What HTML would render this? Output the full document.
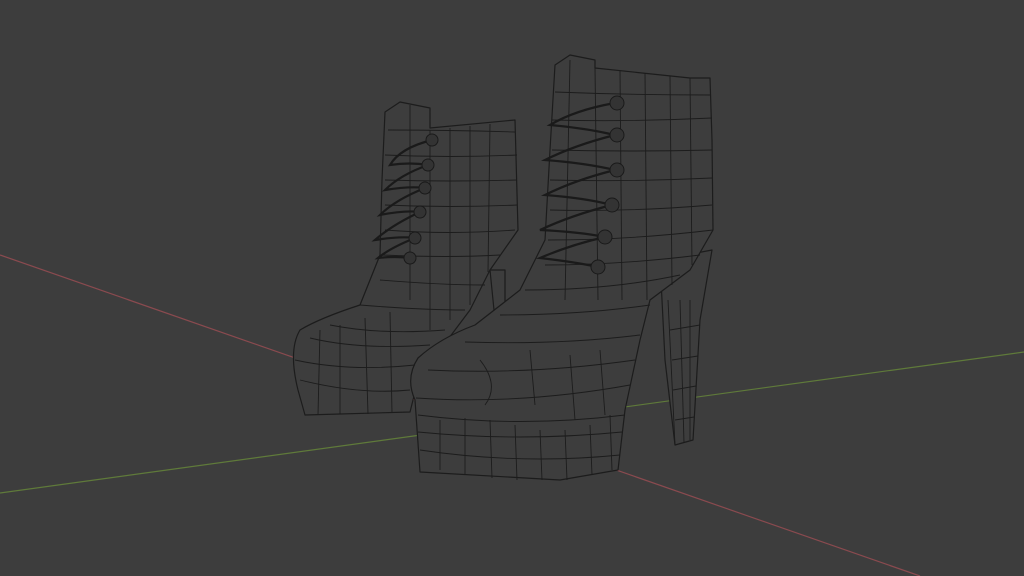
<!DOCTYPE html>
<html><head><style>html,body{margin:0;padding:0;background:#3d3d3d;overflow:hidden}svg{display:block}</style></head>
<body>
<svg width="1024" height="576" viewBox="0 0 1024 576" xmlns="http://www.w3.org/2000/svg">
<rect width="1024" height="576" fill="#3d3d3d"/>
<line x1="0" y1="255" x2="920" y2="576" stroke="#8a4a4f" stroke-width="1.2"/>
<line x1="0" y1="493" x2="1024" y2="352" stroke="#5f7a3a" stroke-width="1.2"/>
<g fill="#3d3d3d" stroke="#1c1c1c" stroke-width="1.2" stroke-linejoin="round">
<path d="M385 112 L400 102 L430 108 L430 128 L515 120 L518 230 L490 270 L470 310 L440 350 L415 392 L410 412 L305 415 L298 390 Q288 350 300 330 Q320 318 360 305 L380 255 L382 180 Z"/>
<path d="M490 270 L505 270 L505 330 L495 320 Z"/>
<path d="M660 260 L712 250 L700 320 L693 440 L675 445 L665 360 Z"/>
<path d="M555 65 L570 55 L595 60 L595 68 L690 78 L710 78 L712 140 L713 230 L690 270 L650 300 L640 340 L625 410 L618 470 L560 480 L420 472 L415 400 Q405 378 418 358 Q440 338 475 325 L520 290 L545 240 L550 150 Z"/>
</g>
<g fill="none" stroke="#1c1c1c" stroke-width="0.9">
<path d="M300 380 Q360 395 410 390 M295 360 Q350 372 415 365 M310 338 Q360 350 430 345 M330 325 Q380 335 445 330 M360 305 Q420 310 465 310 M380 280 Q440 285 485 285 M382 255 Q450 258 500 255 M385 230 Q450 235 515 230 M385 205 Q450 208 517 205 M385 180 Q450 182 517 180 M385 155 Q450 158 517 155 M388 130 Q450 130 515 132"/>
<path d="M320 330 L318 415 M340 325 L340 414 M365 318 L368 414 M390 312 L392 413 M430 130 L430 330 M450 128 L450 320 M470 126 L470 305 M490 124 L488 272 M410 105 L410 300"/>
<path d="M420 450 Q520 465 620 455 M418 432 Q520 442 622 432 M418 415 Q520 428 625 415 M416 398 Q520 405 630 385 M428 370 Q530 375 635 360 M465 342 Q560 345 640 335 M500 315 Q580 315 650 305 M525 290 Q610 290 680 275 M545 265 Q620 265 700 255 M548 240 Q630 240 713 230 M550 210 Q630 212 712 205 M550 180 Q630 182 712 178 M552 150 Q630 152 712 150 M552 120 Q630 122 712 118 M555 92 Q630 95 710 95"/>
<path d="M440 420 L440 470 M465 418 L465 475 M490 420 L492 478 M515 425 L517 480 M540 430 L542 480 M565 430 L567 480 M590 425 L592 475 M610 415 L612 470 M480 360 Q500 385 485 405 M530 350 L535 405 M570 355 L575 420 M600 350 L605 415 M595 68 L598 300 M620 70 L622 300 M645 73 L647 300 M670 76 L672 285 M690 78 L692 265 M570 60 L565 300"/>
<path d="M668 300 L675 445 M680 300 L684 443 M690 300 L690 440 M670 330 L700 325 M672 360 L698 356 M673 390 L696 386 M675 420 L694 417"/>
</g>
<g fill="none" stroke="#1a1a1a" stroke-width="2.2">
<path d="M432 140 Q400 148 390 165 Q410 162 428 165 Q400 175 385 190 Q410 186 425 188 Q395 200 380 215 Q405 210 420 212 Q392 225 375 240 Q400 236 415 238 Q390 248 378 258 Q395 256 410 258"/>
<path d="M615 103 Q575 110 550 125 Q585 128 615 135 Q575 145 545 160 Q585 163 615 170 Q575 180 545 195 Q585 198 612 205 Q572 215 540 230 Q580 232 605 237 Q570 245 540 258 Q575 262 598 267"/>
</g>
<g fill="#333" stroke="#1a1a1a" stroke-width="1">
<circle cx="432" cy="140" r="6"/><circle cx="428" cy="165" r="6"/><circle cx="425" cy="188" r="6"/><circle cx="420" cy="212" r="6"/><circle cx="415" cy="238" r="6"/><circle cx="410" cy="258" r="6"/>
<circle cx="617" cy="103" r="7"/><circle cx="617" cy="135" r="7"/><circle cx="617" cy="170" r="7"/><circle cx="612" cy="205" r="7"/><circle cx="605" cy="237" r="7"/><circle cx="598" cy="267" r="7"/>
</g>
</svg>
</body></html>
